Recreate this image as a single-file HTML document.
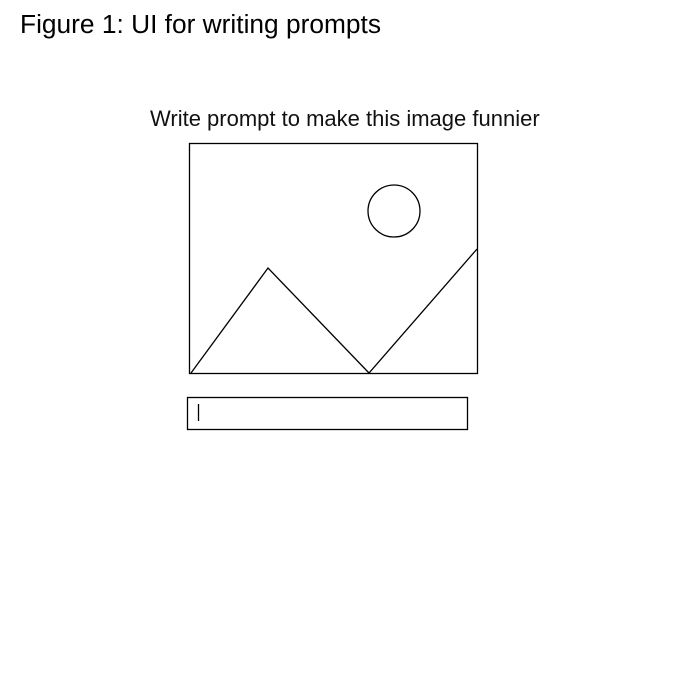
<!DOCTYPE html>
<html><head><meta charset="utf-8"><style>
html,body{margin:0;padding:0;background:#fff;}
body{width:680px;height:680px;position:relative;overflow:hidden;font-family:"Liberation Sans",sans-serif;}
.t{position:absolute;left:20px;top:9px;font-size:26.3px;color:#000;white-space:nowrap;}
.s{position:absolute;left:150px;top:106px;font-size:22px;color:#111;white-space:nowrap;letter-spacing:0px;}
svg{position:absolute;left:0;top:0;}
</style></head><body>
<div class="t">Figure 1: UI for writing prompts</div>
<div class="s">Write prompt to make this image funnier</div>
<svg width="680" height="680">
<g fill="none" stroke="#000" stroke-width="1.3">
<rect x="189.5" y="143.5" width="288" height="230"/>
<circle cx="394" cy="211" r="26"/>
<polyline points="191,373 268,268 369,373 477,249"/>
<rect x="187.5" y="397.5" width="280" height="32"/>
<line x1="198.5" y1="404" x2="198.5" y2="421"/>
</g>
</svg>
</body></html>
